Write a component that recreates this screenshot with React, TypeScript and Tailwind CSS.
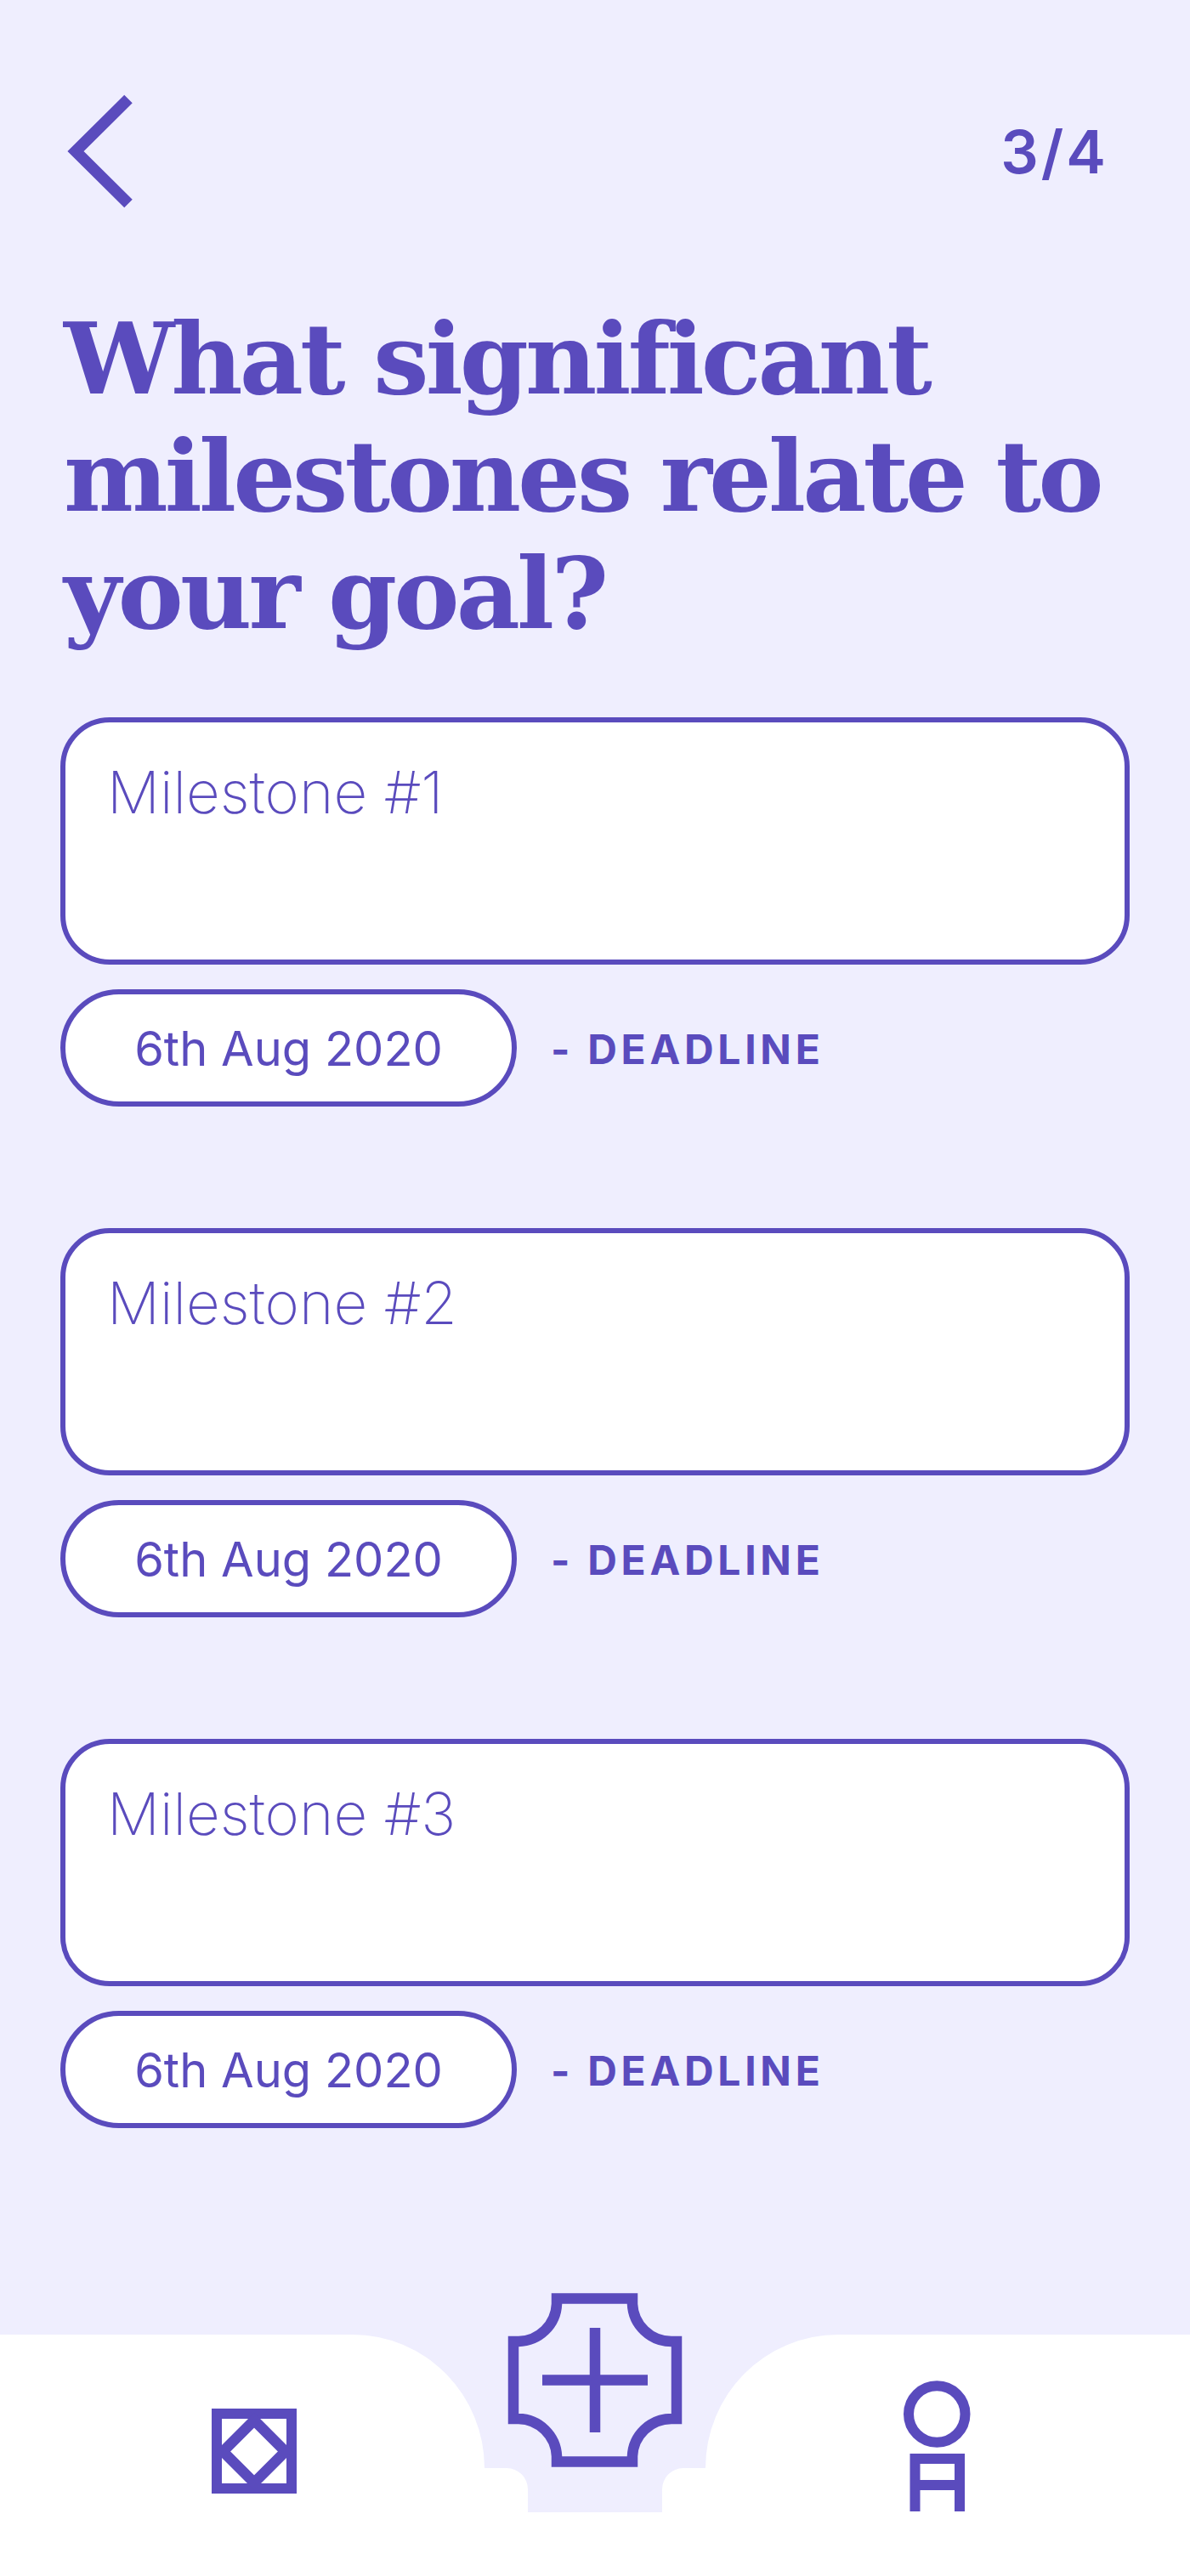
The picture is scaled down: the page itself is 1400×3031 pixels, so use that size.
const milestones = ["Milestone #1", "Milestone #2", "Milestone #3"];

const BackIcon = () => (
  <svg width="80" height="138" viewBox="0 0 80 138" className="block text-[#5a4bbd]">
    <path d="M73 7.5 L11 69 L73 130.5" fill="none" stroke="currentColor" strokeWidth="13.5" />
  </svg>
);

const BottomNav = () => (
  <svg width="1400" height="341" viewBox="0 2690 1400 341" className="block mt-auto text-[#5a4bbd]">
    <path
      d="M0 2747 H415 A155 157 0 0 1 570 2904 H596 A25 25 0 0 1 621 2929 V2956 H779 V2929 A25 25 0 0 1 804 2904 H830 A156 157 0 0 1 986 2747 H1400 V3031 H0 Z"
      fill="#ffffff"
    />
    {/* home */}
    <g fill="none" stroke="currentColor">
      <rect x="255" y="2840" width="88" height="88" strokeWidth="12" />
      <path d="M299 2847.75 L335.75 2884.5 L299 2921.25 L262.25 2884.5 Z" strokeWidth="12.4" />
    </g>
    {/* add */}
    <g fill="none" stroke="currentColor" strokeWidth="12.5">
      <path d="M655 2704.5 H744 V2711 A46 46 0 0 0 790 2755 H796 V2846 H790 A46 46 0 0 0 744 2890 V2896.5 H655 V2890 A46 46 0 0 0 610 2846 H604 V2755 H610 A46 46 0 0 0 655 2711 Z" />
      <path d="M638 2800.5 H762 M700 2739 V2862" />
    </g>
    {/* profile */}
    <g fill="none" stroke="currentColor" strokeWidth="12">
      <circle cx="1102.25" cy="2840.5" r="33.25" />
      <path d="M1076.5 2955 V2893 H1129 V2955 M1076.5 2924 H1129" />
    </g>
  </svg>
);

export default function App() {
  return (
    <div className="flex min-h-screen flex-col bg-[#efeefe] font-['Inter',sans-serif] text-[#5a4bbd]">
      <header className="flex items-start justify-between pl-[78px] pr-[96px] pt-[109px]">
        <BackIcon />
        <span className="mt-[30px] text-[70px] font-semibold leading-[80px] tracking-[3px]">3/4</span>
      </header>

      <h1 className="mt-[106px] pl-[75px] pr-[72px] font-['DejaVu_Serif',serif] text-[116px] font-bold leading-[138px] tracking-[-3.9px]">
        What significant milestones relate to your goal?
      </h1>

      <div className="mt-[77px] flex flex-col gap-[143px] px-[71px]">
        {milestones.map((label) => (
          <section key={label} className="flex flex-col gap-[29px]">
            <div className="h-[291px] rounded-[58px] border-[6px] border-[#5a4bbd] bg-white pl-[49px] pt-[42px]">
              <span className="block text-[69px] font-extralight leading-[80px]">{label}</span>
            </div>
            <div className="flex items-center gap-[40px]">
              <div className="flex h-[138px] w-[537px] items-center justify-center rounded-[69px] border-[6px] border-[#5a4bbd] bg-white pt-[2px]">
                <span className="text-[56px] font-normal leading-none">6th Aug 2020</span>
              </div>
              <span className="pt-[3px] text-[48px] font-bold leading-none tracking-[4.7px]">- DEADLINE</span>
            </div>
          </section>
        ))}
      </div>

      <BottomNav />
    </div>
  );
}
